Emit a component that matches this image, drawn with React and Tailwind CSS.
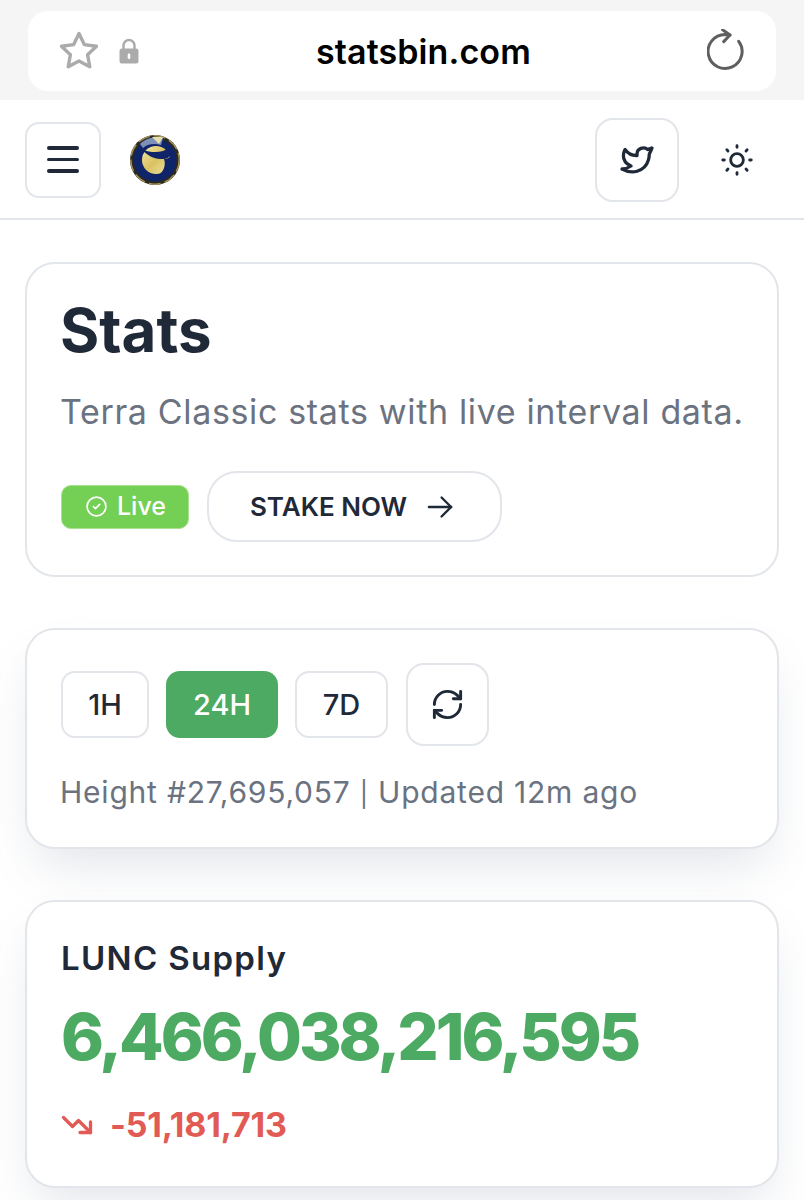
import React from "react";
import { TbBrandTwitter, TbSun, TbArrowRight, TbCircleCheck, TbTrendingDown } from "react-icons/tb";
import { RefreshCw } from "lucide-react";

function Logo() {
  return (
    <svg width="50" height="50" viewBox="0 0 50 50">
      <defs>
        <linearGradient id="gold" x1="0" y1="0" x2="1" y2="1">
          <stop offset="0" stopColor="#f4e9ac" />
          <stop offset="0.5" stopColor="#d9c262" />
          <stop offset="1" stopColor="#f0e4a0" />
        </linearGradient>
      </defs>
      <circle cx="25" cy="25" r="25" fill="#2b2a22" />
      <circle cx="25" cy="25" r="24.2" fill="none" stroke="#a8935a" strokeWidth="1.4" strokeDasharray="12 4" />
      <circle cx="25" cy="25" r="21.5" fill="#10246a" />
      <path d="M10 9 C15 4 24 1 33 3 L31 10 C24 8 17 9 13 13 Z" fill="#7f90b8" />
      <path d="M22 2 L33 2 L29 9 Z" fill="#e5dfb0" />
      <circle cx="26" cy="25" r="14" fill="url(#gold)" />
      <path d="M12 15 C20 17 26 18 33 16 C36 15 38 13 40 11 L42 16 C40 24 36 24 30 24 C24 24 17 20 12 15 Z" fill="#10246a" />
      <path d="M34 24 C37 24 39 23 41 21 L41 30 C39 35 35 38 29 39.5 C34 36 36 30 34 24 Z" fill="#10246a" />
    </svg>
  );
}

export default function App() {
  return (
    <div className="w-[804px] h-[1200px] overflow-hidden bg-white font-['Inter','Liberation_Sans',sans-serif] text-[#1f2937]">
      <div className="h-[100px] bg-[#f5f5f5] pt-[11px] px-[28px]">
        <div className="relative h-[80px] rounded-[20px] bg-white flex items-center justify-between pl-[30px] pr-[31px]">
          <div className="flex items-center gap-[19px]">
            <svg width="42" height="42" viewBox="0 0 42 42" fill="none" stroke="#ababab" strokeWidth="3.4" strokeLinejoin="round">
              <path d="M21 3.5 L26.3 14.6 L38.5 16.2 L29.6 24.7 L31.8 36.8 L21 31 L10.2 36.8 L12.4 24.7 L3.5 16.2 L15.7 14.6 Z" />
            </svg>
            <svg width="20" height="26" viewBox="0 0 20 26">
              <path d="M4.5 12 V7.5 a5.5 5.5 0 0 1 11 0 V12" fill="none" stroke="#ababab" strokeWidth="2.4" />
              <rect x="0.5" y="10.5" width="19" height="15" rx="2.5" fill="#ababab" />
              <rect x="8.7" y="15.5" width="2.6" height="5.5" rx="1.2" fill="#fff" />
            </svg>
          </div>
          <span className="absolute left-[288px] top-[19px] text-[34px] leading-[44px] font-semibold text-black tracking-[0.1px]">statsbin.com</span>
          <svg width="38" height="44" viewBox="0 0 38 44" fill="none" stroke="#5f5f5f" strokeWidth="3" strokeLinecap="round" strokeLinejoin="round">
            <path d="M23 6 L18 5.5 A17 17 0 1 0 31.7 12.3" />
            <path d="M15.6 0.8 L23 6 L16.7 12.6" />
          </svg>
        </div>
      </div>

      <header className="h-[120px] border-b-2 border-[#e2e5ea] flex items-center pl-[25px] pr-[48px]">
        <button className="w-[76px] h-[76px] rounded-[14px] border-2 border-[#e2e5ea] flex flex-col items-center justify-center gap-[8px] mt-[1px]">
          <span className="block w-[32px] h-[3.5px] rounded-full bg-[#1f2937]"></span>
          <span className="block w-[32px] h-[3.5px] rounded-full bg-[#1f2937]"></span>
          <span className="block w-[32px] h-[3.5px] rounded-full bg-[#1f2937]"></span>
        </button>
        <div className="ml-[29px] mt-[1px]"><Logo /></div>
        <button className="ml-auto w-[84px] h-[84px] rounded-[18px] border-2 border-[#e2e5ea] flex items-center justify-center mt-[1px]">
          <TbBrandTwitter size={36} strokeWidth={2.2} />
        </button>
        <div className="ml-[39px] mt-[1px]"><TbSun size={38} strokeWidth={1.8} /></div>
      </header>

      <main className="px-[25px] pt-[42px] flex flex-col gap-[51px]">
        <section className="w-[754px] h-[315px] rounded-[30px] border-2 border-[#e2e5ea] bg-white pl-[34px] pt-[28px]">
          <h1 className="-ml-[1px] text-[60px] leading-[76px] font-bold">Stats</h1>
          <p className="-ml-[1px] mt-[19px] text-[34px] leading-[50px] text-[#6b7280] tracking-[0.65px] whitespace-nowrap">Terra Classic stats with live interval data.</p>
          <div className="mt-[34px] flex items-center gap-[18px]">
            <span className="w-[128px] h-[44px] rounded-[10px] bg-[#74d054] border border-[#a9e191] text-white flex items-center justify-center gap-[8px] text-[25px] font-medium">
              <TbCircleCheck size={25} strokeWidth={1.6} />Live
            </span>
            <button className="w-[295px] h-[71px] rounded-[30px] border-2 border-[#e2e5ea] flex items-center justify-center gap-[14px] text-[26px] font-semibold">
              STAKE NOW <TbArrowRight size={38} strokeWidth={1.5} />
            </button>
          </div>
        </section>

        <section className="w-[754px] h-[221px] rounded-[30px] border-2 border-[#e2e5ea] bg-white pl-[34px] pt-[33px] shadow-[0_25px_50px_-12px_rgba(100,116,139,0.2)]">
          <div className="flex items-center gap-[17px]">
            <button className="w-[88px] h-[67px] rounded-[14px] border-2 border-[#e2e5ea] text-[29px] font-medium">1H</button>
            <button className="w-[112px] h-[67px] rounded-[14px] bg-[#4caa62] text-white text-[29px] font-medium">24H</button>
            <button className="w-[93px] h-[67px] rounded-[14px] border-2 border-[#e2e5ea] text-[29px] font-medium">7D</button>
            <button className="ml-[1px] w-[83px] h-[83px] rounded-[18px] border-2 border-[#e2e5ea] flex items-center justify-center">
              <RefreshCw size={35} strokeWidth={2} />
            </button>
          </div>
          <p className="-ml-[1px] mt-[22px] text-[30px] leading-[48px] text-[#6b7280] tracking-[0.78px] whitespace-nowrap">Height #27,695,057 <span className="text-[25px]">|</span> Updated 12m ago</p>
        </section>

        <section className="w-[754px] h-[288px] rounded-[30px] border-2 border-[#e2e5ea] bg-white pl-[34px] pt-[32px] shadow-[0_25px_50px_-12px_rgba(100,116,139,0.2)]">
          <h2 className="text-[33px] leading-[48px] font-semibold tracking-[1.3px]">LUNC Supply</h2>
          <p className="mt-[14px] text-[65px] leading-[82px] font-extrabold text-[#4caa62] tracking-[-3px] whitespace-nowrap">6,466,038,216,595</p>
          <div className="mt-[23px] -ml-[2px] flex items-center gap-[15px] text-[#e25a54]">
            <TbTrendingDown size={36} strokeWidth={2.2} />
            <span className="text-[34px] leading-[48px] font-bold tracking-[-0.2px]">-51,181,713</span>
          </div>
        </section>
      </main>
    </div>
  );
}
